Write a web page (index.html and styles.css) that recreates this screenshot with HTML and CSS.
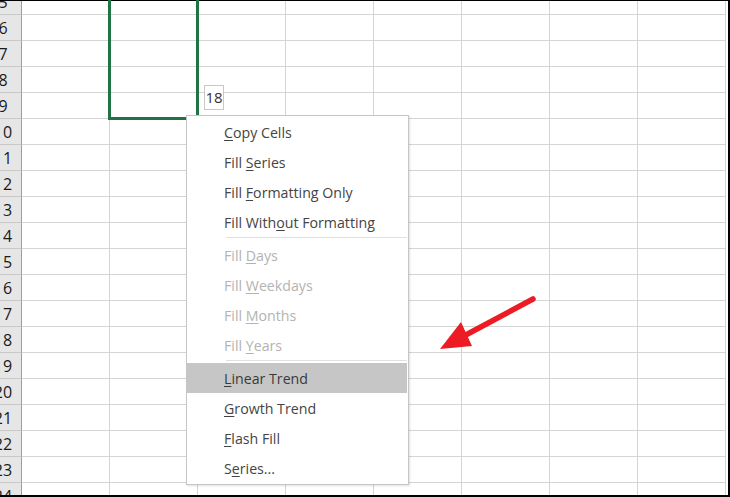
FILE: index.html
```html
<!DOCTYPE html>
<html>
<head>
<meta charset="utf-8">
<link rel="stylesheet" href="styles.css">
</head>
<body>
<div class="stage">
  <div class="frame">
    <div class="sheet">
      <div class="row"><div class="rh">5</div><div class="c"></div><div class="c"></div><div class="c"></div><div class="c"></div><div class="c"></div><div class="c"></div><div class="c"></div><div class="c"></div></div>
      <div class="row"><div class="rh">6</div><div class="c"></div><div class="c"></div><div class="c"></div><div class="c"></div><div class="c"></div><div class="c"></div><div class="c"></div><div class="c"></div></div>
      <div class="row"><div class="rh">7</div><div class="c"></div><div class="c"></div><div class="c"></div><div class="c"></div><div class="c"></div><div class="c"></div><div class="c"></div><div class="c"></div></div>
      <div class="row"><div class="rh">8</div><div class="c"></div><div class="c"></div><div class="c"></div><div class="c"></div><div class="c"></div><div class="c"></div><div class="c"></div><div class="c"></div></div>
      <div class="row"><div class="rh">9</div><div class="c"></div><div class="c"></div><div class="c"></div><div class="c"></div><div class="c"></div><div class="c"></div><div class="c"></div><div class="c"></div></div>
      <div class="row"><div class="rh">10</div><div class="c"></div><div class="c"></div><div class="c"></div><div class="c"></div><div class="c"></div><div class="c"></div><div class="c"></div><div class="c"></div></div>
      <div class="row"><div class="rh">11</div><div class="c"></div><div class="c"></div><div class="c"></div><div class="c"></div><div class="c"></div><div class="c"></div><div class="c"></div><div class="c"></div></div>
      <div class="row"><div class="rh">12</div><div class="c"></div><div class="c"></div><div class="c"></div><div class="c"></div><div class="c"></div><div class="c"></div><div class="c"></div><div class="c"></div></div>
      <div class="row"><div class="rh">13</div><div class="c"></div><div class="c"></div><div class="c"></div><div class="c"></div><div class="c"></div><div class="c"></div><div class="c"></div><div class="c"></div></div>
      <div class="row"><div class="rh">14</div><div class="c"></div><div class="c"></div><div class="c"></div><div class="c"></div><div class="c"></div><div class="c"></div><div class="c"></div><div class="c"></div></div>
      <div class="row"><div class="rh">15</div><div class="c"></div><div class="c"></div><div class="c"></div><div class="c"></div><div class="c"></div><div class="c"></div><div class="c"></div><div class="c"></div></div>
      <div class="row"><div class="rh">16</div><div class="c"></div><div class="c"></div><div class="c"></div><div class="c"></div><div class="c"></div><div class="c"></div><div class="c"></div><div class="c"></div></div>
      <div class="row"><div class="rh">17</div><div class="c"></div><div class="c"></div><div class="c"></div><div class="c"></div><div class="c"></div><div class="c"></div><div class="c"></div><div class="c"></div></div>
      <div class="row"><div class="rh">18</div><div class="c"></div><div class="c"></div><div class="c"></div><div class="c"></div><div class="c"></div><div class="c"></div><div class="c"></div><div class="c"></div></div>
      <div class="row"><div class="rh">19</div><div class="c"></div><div class="c"></div><div class="c"></div><div class="c"></div><div class="c"></div><div class="c"></div><div class="c"></div><div class="c"></div></div>
      <div class="row"><div class="rh">20</div><div class="c"></div><div class="c"></div><div class="c"></div><div class="c"></div><div class="c"></div><div class="c"></div><div class="c"></div><div class="c"></div></div>
      <div class="row"><div class="rh">21</div><div class="c"></div><div class="c"></div><div class="c"></div><div class="c"></div><div class="c"></div><div class="c"></div><div class="c"></div><div class="c"></div></div>
      <div class="row"><div class="rh">22</div><div class="c"></div><div class="c"></div><div class="c"></div><div class="c"></div><div class="c"></div><div class="c"></div><div class="c"></div><div class="c"></div></div>
      <div class="row"><div class="rh">23</div><div class="c"></div><div class="c"></div><div class="c"></div><div class="c"></div><div class="c"></div><div class="c"></div><div class="c"></div><div class="c"></div></div>
      <div class="row"><div class="rh">24</div><div class="c"></div><div class="c"></div><div class="c"></div><div class="c"></div><div class="c"></div><div class="c"></div><div class="c"></div><div class="c"></div></div>
    </div>
  </div>

  <div class="selection"></div>
  <div class="tip">18</div>

  <div class="menu">
    <div class="item"><u>C</u>opy Cells</div>
    <div class="item">Fill <u>S</u>eries</div>
    <div class="item">Fill <u>F</u>ormatting Only</div>
    <div class="item">Fill With<u>o</u>ut Formatting</div>
    <div class="sep"></div>
    <div class="item disabled">Fill <u>D</u>ays</div>
    <div class="item disabled">Fill <u>W</u>eekdays</div>
    <div class="item disabled">Fill <u>M</u>onths</div>
    <div class="item disabled">Fill <u>Y</u>ears</div>
    <div class="sep"></div>
    <div class="item active"><u>L</u>inear Trend</div>
    <div class="item"><u>G</u>rowth Trend</div>
    <div class="item"><u>F</u>lash Fill</div>
    <div class="item">S<u>e</u>ries...</div>
  </div>

  <svg class="arrow" width="730" height="497" viewBox="0 0 730 497">
    <line x1="533" y1="299" x2="462" y2="337" stroke="#ed1c24" stroke-width="5.5" stroke-linecap="round"/>
    <polygon points="440,349 461,322 472,346" fill="#ed1c24"/>
  </svg>
</div>
</body>
</html>
```

FILE: styles.css
```css
html, body {
  margin: 0;
  padding: 0;
  background: #ffffff;
}

body {
  width: 730px;
  height: 497px;
  overflow: hidden;
}

.stage {
  position: relative;
  width: 730px;
  height: 497px;
}

.frame {
  width: 730px;
  height: 497px;
  box-sizing: border-box;
  border-top: 1px solid #000000;
  border-right: 2px solid #000000;
  border-bottom: 2px solid #000000;
  overflow: hidden;
  background: #ffffff;
}

.sheet {
  margin: -12px 0 0 -15px;
  display: flex;
  flex-direction: column;
}

.row {
  display: flex;
  flex: none;
  height: 26px;
}

.rh {
  flex: none;
  width: 36px;
  height: 25px;
  background: #e6e6e6;
  border-right: 1px solid #9e9e9e;
  border-bottom: 1px solid #c8c8c8;
  font-family: "Open Sans", "Noto Sans", sans-serif;
  font-size: 16px;
  line-height: 27px;
  color: #1a1a1a;
  text-align: center;
  overflow: hidden;
}

.c {
  flex: none;
  width: 87px;
  height: 25px;
  border-right: 1px solid #d4d4d4;
  border-bottom: 1px solid #d4d4d4;
}

.selection {
  position: absolute;
  left: 108px;
  top: -10px;
  width: 91px;
  height: 130px;
  box-sizing: border-box;
  border: 3px solid #217346;
}

.tip {
  position: absolute;
  left: 204px;
  top: 85px;
  width: 20px;
  height: 25px;
  box-sizing: border-box;
  border: 1px solid #c8c8c8;
  background: #ffffff;
  font-family: "Open Sans", "Noto Sans", sans-serif;
  font-size: 15px;
  line-height: 23px;
  text-align: center;
  color: #333333;
}

.menu {
  position: absolute;
  left: 186px;
  top: 115px;
  width: 223px;
  box-sizing: border-box;
  border: 1px solid #c6c6c6;
  padding: 1px 1px 1px 0;
  background: #ffffff;
  box-shadow: 1px 1px 2px rgba(0, 0, 0, 0.12);
  font-family: "Open Sans", "Noto Sans", sans-serif;
  font-size: 14.2px;
  color: #444444;
}

.item {
  height: 30px;
  line-height: 31px;
  padding-left: 37px;
  white-space: nowrap;
}

.item u {
  text-decoration: underline;
  text-underline-offset: 2px;
  text-decoration-thickness: 1px;
}

.item.disabled {
  color: #b3b3b3;
}

.item.active {
  background: #c6c6c6;
  color: #3a3a3a;
}

.sep {
  height: 1px;
  margin: 0 0 2px 39px;
  background: #e0e0e0;
}

.arrow {
  position: absolute;
  left: 0;
  top: 0;
  pointer-events: none;
}
```
